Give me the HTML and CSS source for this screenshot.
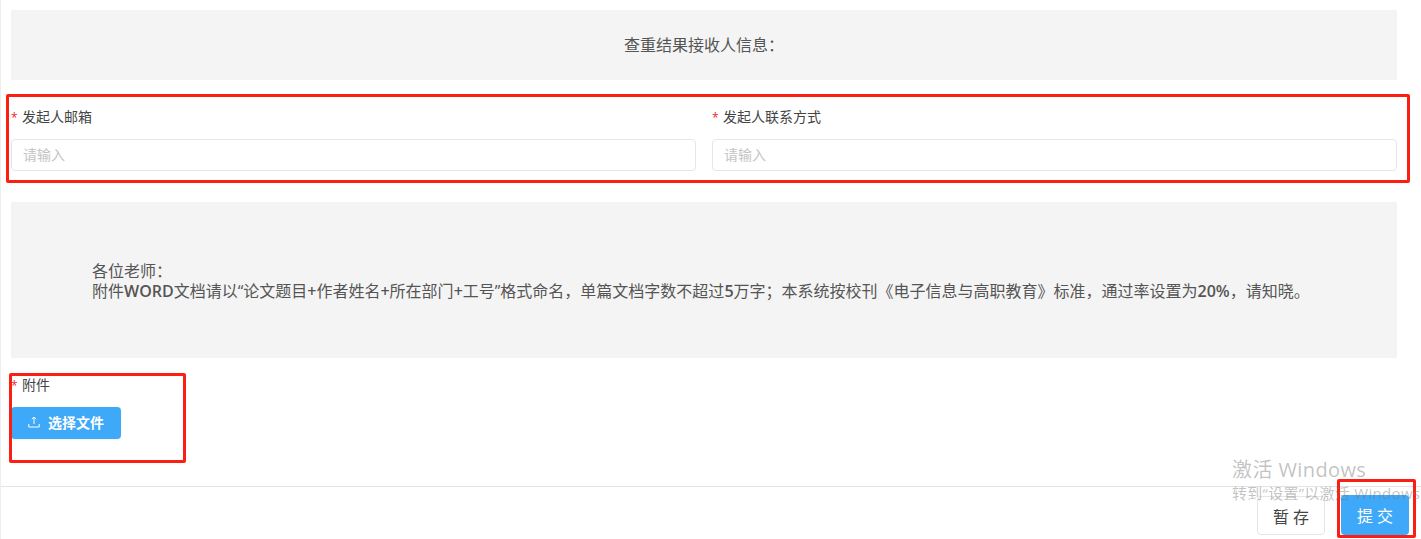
FILE: index.html
```html
<!DOCTYPE html>
<html lang="en">
<head>
    <meta charset="UTF-8">
    <meta name="viewport" content="width=device-width, initial-scale=1.0">
    <title>查重</title>
    <link rel="stylesheet" href="styles.css">
</head>
<body>

    <div class="page">
        <div class="form-body">
            <div class="notice notice-title">查重结果接收人信息：</div>

            <div class="form-row">
                <div class="field">
                    <label class="field-label"><span class="req">*</span>发起人邮箱</label>
                    <input class="field-input" type="text" placeholder="请输入">
                </div>
                <div class="field">
                    <label class="field-label"><span class="req">*</span>发起人联系方式</label>
                    <input class="field-input" type="text" placeholder="请输入">
                </div>
            </div>

            <div class="notice notice-text">
                <p>各位老师：</p>
                <p>附件<b>WORD</b>文档请以“论文题目<b>+</b>作者姓名<b>+</b>所在部门<b>+</b>工号”格式命名，单篇文档字数不超过<b>5</b>万字；本系统按校刊《电子信息与高职教育》标准，通过率设置为<b>20%</b>，请知晓。</p>
            </div>

            <div class="upload">
                <label class="field-label"><span class="req">*</span>附件</label>
                <button class="upload-btn" type="button">
                    <svg class="upload-icon" viewBox="0 0 12 12" width="12" height="12" fill="none" stroke="currentColor" stroke-width="1">
                        <path d="M6 8V1.2M3.8 3.2L6 1l2.2 2.2M.8 8v3h10.4V8"/>
                    </svg>
                    选择文件
                </button>
            </div>
        </div>

        <div class="footer">
            <button class="btn" type="button">暂 存</button>
            <button class="btn btn-primary" type="button">提 交</button>
        </div>
    </div>

    <!-- red markers drawn over the screenshot -->
    <div class="mark mark-row"></div>
    <div class="mark mark-upload"></div>
    <div class="mark mark-submit"></div>

    <div class="watermark">
        <div class="watermark-title">激活 Windows</div>
        <div class="watermark-sub">转到“设置”以激活 Windows</div>
    </div>

</body>
</html>
```

FILE: styles.css
```css
/* General Styles */
html, body {
    margin: 0;
    padding: 0;
    height: 539px;
    overflow: hidden;
}

body {
    font-family: "Open Sans", "Noto Sans CJK SC", sans-serif;
    background: #fff;
    color: #333;
    font-size: 14px;
}

.page {
    height: 539px;
    display: flex;
    flex-direction: column;
    border-left: 1px solid #eee;
    box-sizing: border-box;
}

.form-body {
    flex: 1;
    padding: 10px 24px 0 10px;
}

/* Grey notice panels */
.notice {
    background: #f4f4f4;
    color: #555;
}

.notice-title {
    height: 70px;
    line-height: 70px;
    text-align: center;
    font-size: 16px;
}

.notice-text {
    height: 156px;
    margin-top: 31px;
    padding: 59px 0 0 81px;
    box-sizing: border-box;
    line-height: 20px;
    font-size: 16px;
}

.notice-text p {
    margin: 0;
}

.notice-text b {
    font-weight: 600;
}

/* Inputs */
.form-row {
    display: grid;
    grid-template-columns: 1fr 1fr;
    column-gap: 16px;
    margin-top: 27px;
}

.field-label {
    display: block;
    height: 20px;
    line-height: 20px;
    font-size: 14px;
    color: #444;
}

.req {
    display: inline-block;
    width: 11px;
    color: #f5222d;
    font-size: 12px;
}

.field-input {
    display: block;
    width: 100%;
    height: 32px;
    margin-top: 12px;
    padding: 0 11px 2px;
    box-sizing: border-box;
    border: 1px solid #e6e6e6;
    border-radius: 4px;
    font-family: inherit;
    font-size: 14px;
    outline: none;
}

.field-input::placeholder {
    color: #c4c4c4;
}

/* Attachment */
.upload {
    margin-top: 17px;
}

.upload-btn {
    display: flex;
    align-items: center;
    justify-content: center;
    gap: 8px;
    width: 110px;
    height: 32px;
    margin-top: 12px;
    padding: 0 0 2px;
    border: none;
    border-radius: 4px;
    background: #3fa9f9;
    color: #fff;
    font-family: inherit;
    font-size: 14px;
    font-weight: 600;
    box-shadow: 0 1px 2px rgba(0, 0, 0, 0.06);
}

/* Footer buttons */
.footer {
    height: 53px;
    box-sizing: border-box;
    border-top: 1px solid #e4e4e4;
    display: flex;
    justify-content: flex-end;
    align-items: flex-end;
    gap: 16px;
    padding: 0 12px 4px 0;
}

.btn {
    width: 68px;
    height: 39px;
    border: 1px solid #e6e6e6;
    border-radius: 4px;
    background: #fff;
    color: #444;
    font-family: inherit;
    font-size: 16px;
}

.btn-primary {
    height: 40px;
    border: none;
    background: #3fa9f9;
    color: #fff;
}

/* Red markers */
.mark {
    position: absolute;
    box-sizing: border-box;
    border: 3px solid #fb1f13;
    border-radius: 2px;
}

.mark-row {
    left: 6px;
    top: 94px;
    width: 1404px;
    height: 89px;
}

.mark-upload {
    left: 9px;
    top: 373px;
    width: 177px;
    height: 90px;
}

.mark-submit {
    left: 1337px;
    top: 479px;
    width: 79px;
    height: 59px;
}

/* Windows watermark */
.watermark {
    position: absolute;
    left: 1232px;
    top: 457px;
    color: rgba(120, 120, 120, 0.45);
    white-space: nowrap;
    pointer-events: none;
}

.watermark-title {
    font-size: 20px;
    line-height: 26px;
    letter-spacing: 0.4px;
}

.watermark-sub {
    font-size: 15px;
    line-height: 20px;
    letter-spacing: 0.3px;
}
```
